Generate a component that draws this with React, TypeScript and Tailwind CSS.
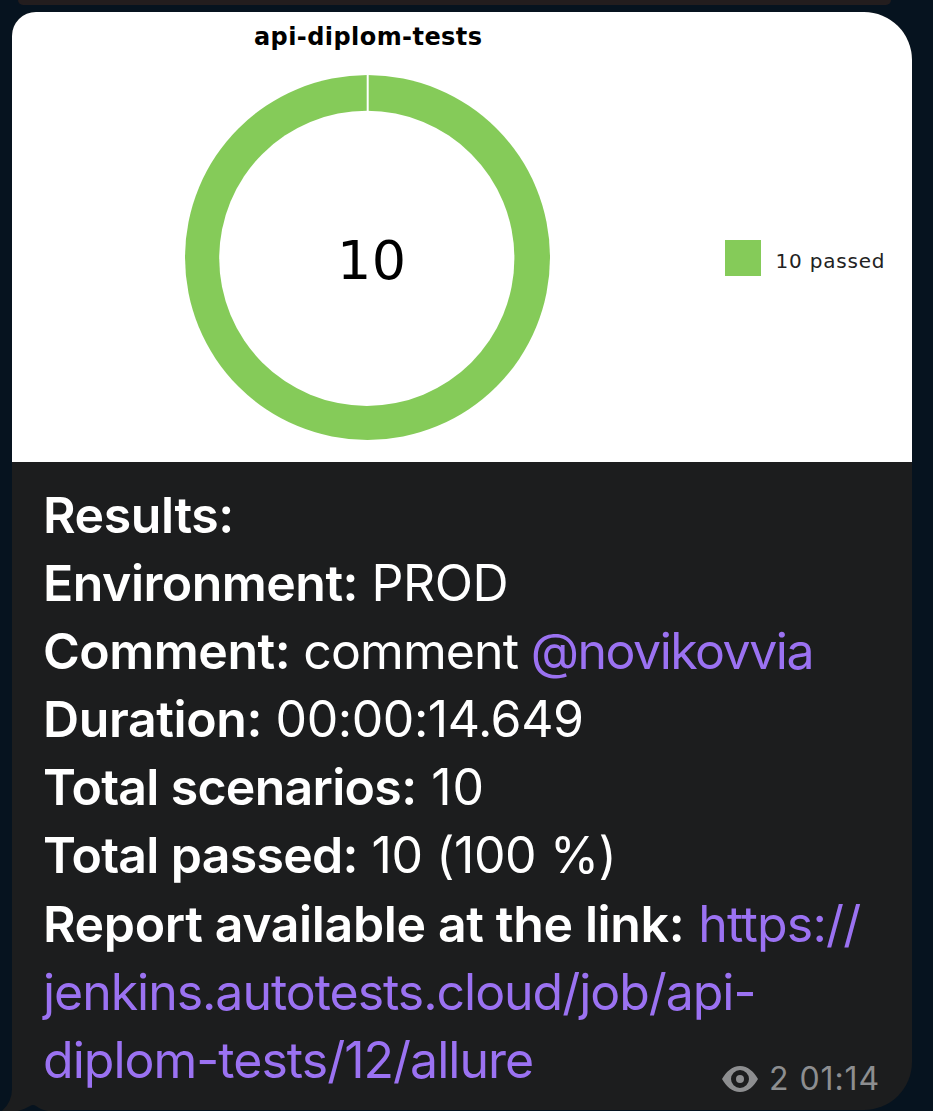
type Row = { name: string; value: string; mention?: string; labelTracking: string; valueTracking: string };

const rows: Row[] = [
  { name: "Results:", value: "", labelTracking: "tracking-[-0.4px]", valueTracking: "" },
  { name: "Environment:", value: "PROD", labelTracking: "tracking-[-0.5px]", valueTracking: "tracking-[-0.5px]" },
  { name: "Comment:", value: "comment", mention: "@novikovvia", labelTracking: "tracking-[-0.5px]", valueTracking: "tracking-[-0.9px]" },
  { name: "Duration:", value: "00:00:14.649", labelTracking: "tracking-[-0.4px]", valueTracking: "tracking-[-0.45px]" },
  { name: "Total scenarios:", value: "10", labelTracking: "tracking-[-0.7px]", valueTracking: "tracking-[0.8px]" },
  { name: "Total passed:", value: "10 (100 %)", labelTracking: "tracking-[-0.7px]", valueTracking: "tracking-[-0.4px]" },
];

function Chart() {
  return (
    <svg className="block" width="900" height="450" viewBox="12 12 900 450">
      <rect x="12" y="12" width="900" height="450" fill="white" />
      <circle cx="367.5" cy="257.5" r="182.5" fill="#85cb59" />
      <circle cx="366.8" cy="258.3" r="147.6" fill="white" />
      <path d="M367.7 74V112" stroke="white" strokeWidth="2" />
      <rect x="725" y="240" width="36" height="36" fill="#85cb59" />
      <text x="254" y="45" fontFamily="DejaVu Sans, sans-serif" fontWeight="700" fontSize="24" textLength="228">api-diplom-tests</text>
      <text x="337" y="279" fontFamily="DejaVu Sans, sans-serif" fontSize="54" textLength="69">10</text>
      <text x="775.5" y="267.5" fontFamily="DejaVu Sans, sans-serif" fontSize="20" fill="#222" textLength="109">10 passed</text>
    </svg>
  );
}

export default function App() {
  return (
    <main className="relative h-[1111px] w-[933px] overflow-hidden bg-[#06131f] pl-3 font-['Inter',sans-serif]">
      <div className="ml-[6px] h-[5px] w-[873px] rounded-b-[16px] bg-[#231d1e]" />
      <svg className="absolute bottom-0 left-0" width="60" height="40" viewBox="0 0 60 40">
        <path d="M12 0V18Q12 31 2 40H60V0Z" fill="#1c1d1e" />
      </svg>
      <article className="relative mt-[7px] h-[1098px] w-[900px] overflow-hidden rounded-tl-[24px] rounded-tr-[48px] rounded-br-[48px] bg-[#1c1d1e]">
        <Chart />
        <div className="pl-[31px] pt-[19px] text-[50px] leading-[68.1px] text-white whitespace-nowrap">
          {rows.map((r) => (
            <p key={r.name}>
              <span className={`font-semibold ${r.labelTracking}`}>{r.name}</span>
              <span className={r.valueTracking}> {r.value}</span>
              {r.mention && <span className="text-[#9b72f2] tracking-[-1.5px]"> {r.mention}</span>}
            </p>
          ))}
          <p>
            <span className="font-semibold tracking-[-0.36px]">Report available at the link:</span>{" "}
            <a className="text-[#9b72f2]">
              <span className="tracking-[-0.8px]">https://</span><br />
              <span className="tracking-[-1.04px]">jenkins.autotests.cloud/job/api-</span><br />
              <span className="tracking-[-0.98px]">diplom-tests/12/allure</span>
            </a>
          </p>
        </div>
        <div className="absolute bottom-[13px] right-[32px] flex items-center text-[32px] leading-[36px] tracking-[0.9px] text-[#8d8e90]">
          <svg className="mr-[11px]" width="36" height="26" viewBox="0 0 36 26">
            <path fillRule="evenodd" fill="currentColor" d="M0 13C4 6 10 0 18 0S32 6 36 13C32 20 26 26 18 26S4 20 0 13ZM18 4A9 9 0 1 0 18 22A9 9 0 1 0 18 4Z" />
            <circle cx="18" cy="13" r="4" fill="currentColor" />
          </svg>
          <span>2 01:14</span>
        </div>
      </article>
      <svg className="absolute bottom-0 left-0" width="60" height="40" viewBox="0 0 60 40">
        <path d="M18 40Q25 38 30 35Q33 33 36 35Q41 39 48 40Z" fill="#06131f" />
      </svg>
    </main>
  );
}
